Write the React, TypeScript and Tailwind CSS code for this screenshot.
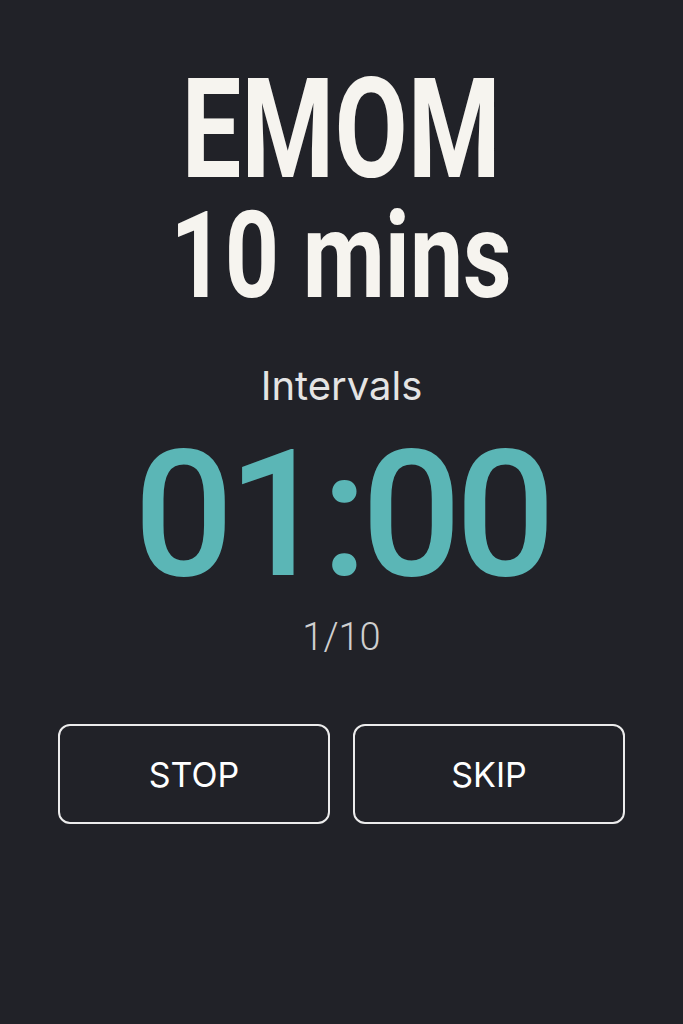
export default function App() {
  return (
    <div className="min-h-[1024px] w-full bg-[#212228] font-['Roboto',sans-serif] flex flex-col items-center">
      {/* 标题 */}
      <h1 className="mt-[64px] text-[140px] leading-[130px] font-bold text-[#f6f4ef] scale-x-[0.76]">EMOM</h1>
      <h2 className="mt-[2px] text-[120px] leading-none font-bold text-[#f6f4ef] scale-x-[0.79]">10 mins</h2>

      {/* 计时 */}
      <p className="mt-[50px] font-['Inter',sans-serif] text-[40px] leading-[40px] text-[#e4e4e4]">Intervals</p>
      <p className="mt-[21px] text-[176px] leading-none font-medium tracking-[-0.035em] text-[#5bb6b6]">01:00</p>
      <p className="mt-[15px] text-[38px] leading-none font-light text-[#cfcfcf]">1/10</p>

      {/* 按钮 */}
      <div className="mt-[68px] w-full px-[58px] grid grid-cols-2 gap-[23px] font-['Inter',sans-serif]">
        <button className="h-[100px] rounded-xl border-2 border-[#ececec] text-[34px] text-white">STOP</button>
        <button className="h-[100px] rounded-xl border-2 border-[#ececec] text-[34px] text-white">SKIP</button>
      </div>
    </div>
  );
}
